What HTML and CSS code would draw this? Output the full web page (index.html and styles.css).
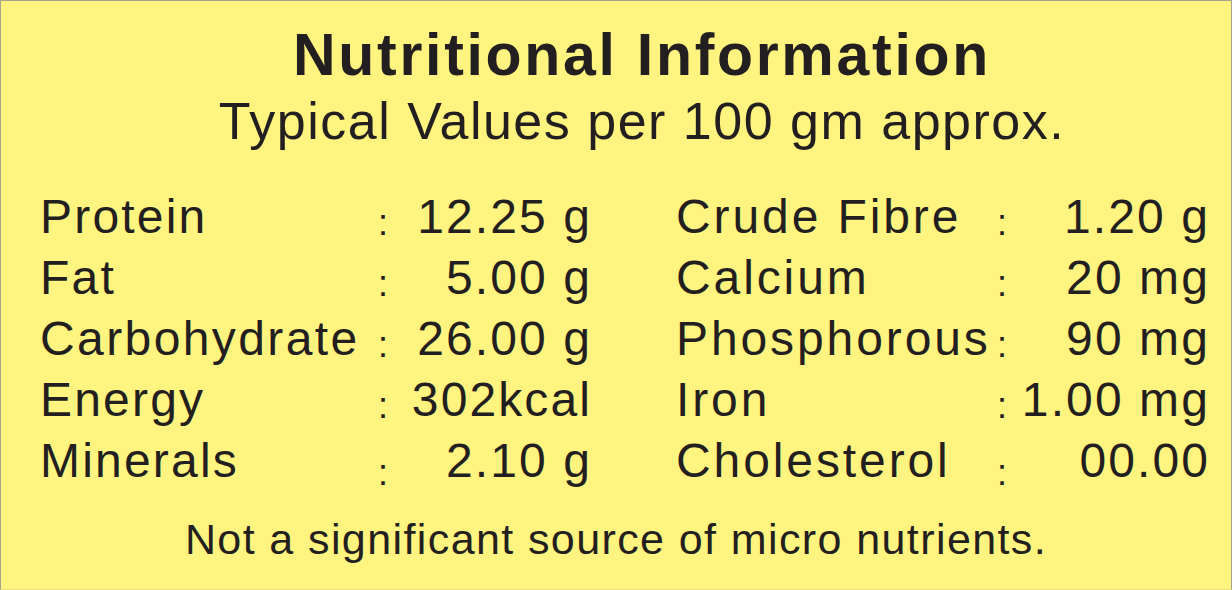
FILE: index.html
```html
<!DOCTYPE html>
<html lang="en">
<head>
<meta charset="utf-8">
<title>Nutritional Information</title>
<link rel="stylesheet" href="styles.css">
</head>
<body>
<div class="label">
  <header class="head">
    <h1 class="title">Nutritional Information</h1>
    <p class="subtitle">Typical Values per 100 gm approx.</p>
  </header>
  <div class="facts">
    <div class="col col-left">
      <span class="name">Protein</span><span class="sep">:</span><span class="val">12.25 g</span>
      <span class="name">Fat</span><span class="sep">:</span><span class="val">5.00 g</span>
      <span class="name wide">Carbohydrate</span><span class="sep">:</span><span class="val">26.00 g</span>
      <span class="name">Energy</span><span class="sep">:</span><span class="val">302kcal</span>
      <span class="name">Minerals</span><span class="sep low">:</span><span class="val">2.10 g</span>
    </div>
    <div class="col col-right">
      <span class="name">Crude Fibre</span><span class="sep">:</span><span class="val">1.20 g</span>
      <span class="name">Calcium</span><span class="sep">:</span><span class="val">20 mg</span>
      <span class="name">Phosphorous</span><span class="sep">:</span><span class="val">90 mg</span>
      <span class="name">Iron</span><span class="sep">:</span><span class="val">1.00 mg</span>
      <span class="name">Cholesterol</span><span class="sep low">:</span><span class="val">00.00</span>
    </div>
  </div>
  <p class="note">Not a significant source of micro nutrients.</p>
</div>
</body>
</html>
```

FILE: styles.css
```css
html, body {
  margin: 0;
  padding: 0;
  background: #fff47f;
}

.label {
  box-sizing: border-box;
  width: 1232px;
  height: 590px;
  background: #fff47f;
  border: 1px solid #a6a291;
  border-bottom-color: #e9de86;
  color: #231f20;
  font-family: "Liberation Sans", Arial, sans-serif;
  padding-top: 21px;
}

.head {
  display: flex;
  flex-direction: column;
  align-items: center;
  padding-left: 52px;
}

.title {
  margin: 0;
  font-size: 59px;
  line-height: 66px;
  font-weight: bold;
  letter-spacing: 2.7px;
}

.subtitle {
  margin: 3px 0 0;
  font-size: 52px;
  line-height: 60px;
  letter-spacing: 1.5px;
}

.facts {
  display: flex;
  gap: 84px;
  margin-top: 35px;
  padding-left: 39px;
}

.col {
  display: grid;
  grid-auto-rows: 61px;
  align-items: baseline;
  font-size: 48px;
  line-height: 61px;
}

.col-left {
  grid-template-columns: 330px 26px 196px;
}

.col-right {
  grid-template-columns: 313px 26px 195px;
}

.name {
  letter-spacing: 2.2px;
  white-space: nowrap;
}

.name.wide {
  letter-spacing: 2.4px;
}

.col-right .name {
  letter-spacing: 2.9px;
}

.sep {
  font-size: 36px;
  text-align: center;
  position: relative;
  top: 2px;
}

.sep.low {
  top: 8px;
}

.val {
  text-align: right;
  letter-spacing: 2.1px;
  white-space: nowrap;
}

.note {
  margin: 23px 0 0;
  text-align: center;
  font-size: 43px;
  line-height: 50px;
  letter-spacing: 1.4px;
}
```
